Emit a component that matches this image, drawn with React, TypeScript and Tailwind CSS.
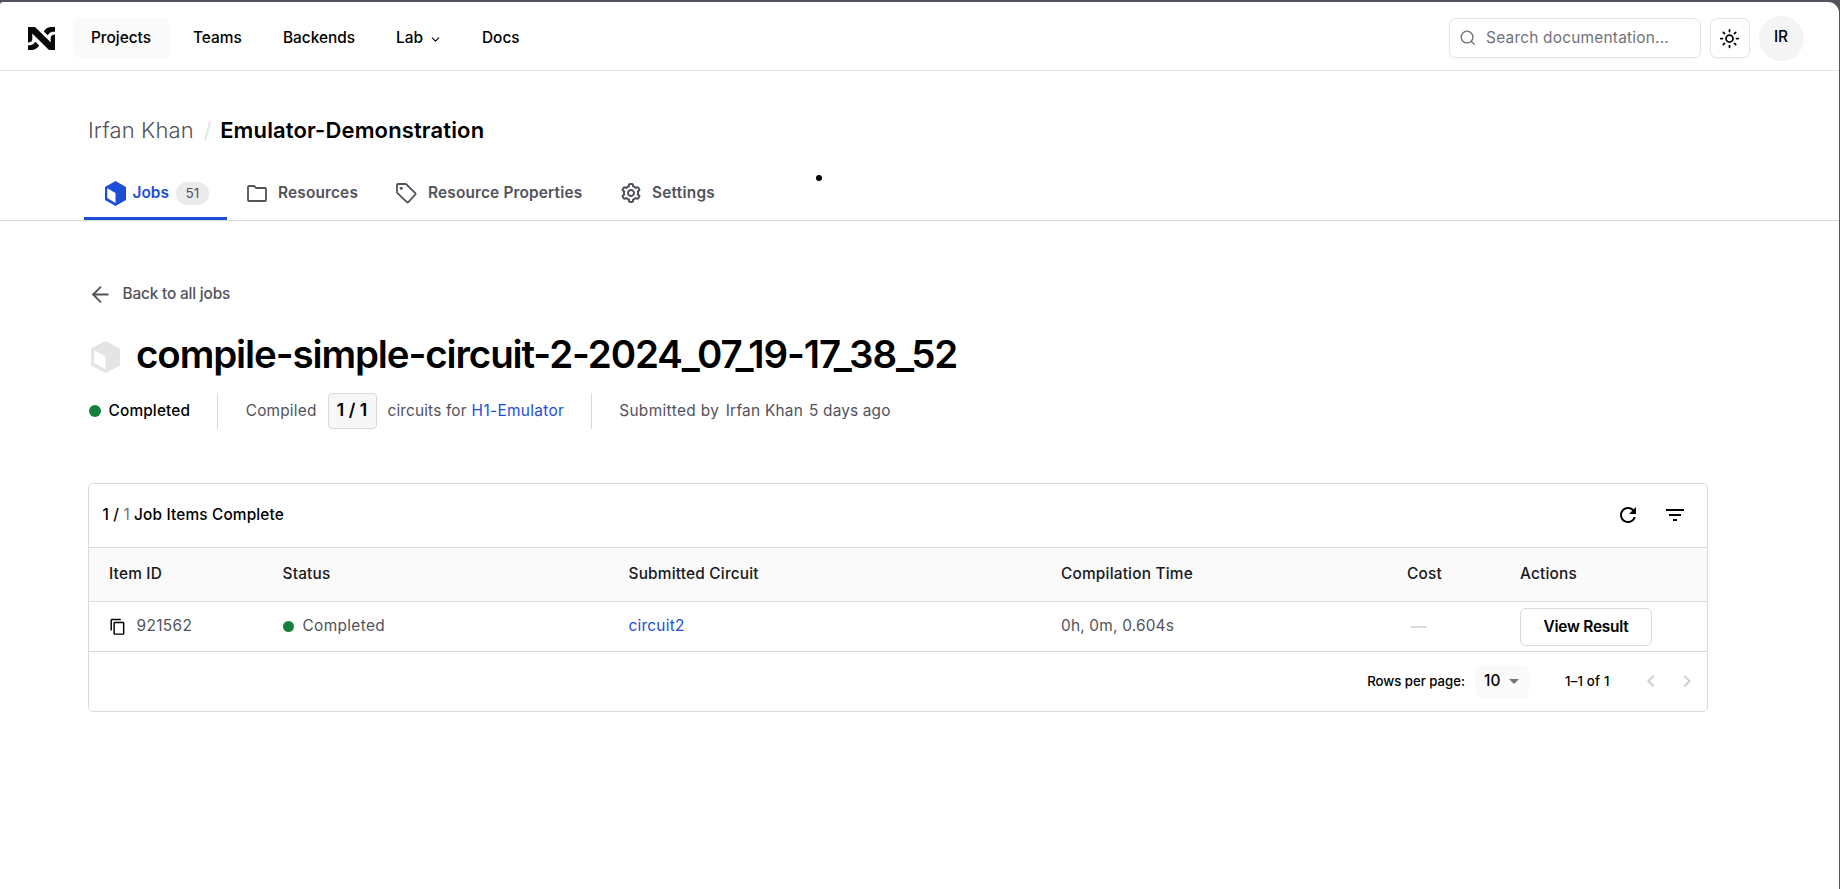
import type { ReactNode } from "react";
import { ArrowLeft, ChevronDown, Search, Sun } from "lucide-react";
import { BiCog } from "react-icons/bi";
import { MdArrowDropDown, MdChevronLeft, MdChevronRight, MdContentCopy, MdFilterList, MdRefresh } from "react-icons/md";

function Logo() {
  return (
    <svg className="mt-[1px] h-[23px] w-[27px] shrink-0" viewBox="0 0 27 23" fill="#09090b">
      <path d="M0 0H7L27 19.6V23H21L4.3 6.6V12Q4.3 15.3 0 15.5Z" />
      <path d="M0 18.3H2.5Q5.5 18 7.3 14.8L11.2 18.6Q8.5 23 3.5 23H0Z" />
      <path d="M27 4.7H24.5Q21.5 5 19.7 8.2L15.8 4.4Q18.5 0 23.5 0H27Z" />
      <path d="M27 20L22.7 16V11Q22.7 7.7 27 7.5Z" />
    </svg>
  );
}

function Cube({ className }: { className: string }) {
  return (
    <svg className={className} viewBox="0 0 28 32" preserveAspectRatio="none" fill="currentColor" fillRule="evenodd">
      <path d="M14 0L28 7.6V24.4L14 32L0 24.4V7.6ZM3 9.2V21.9L14 28V15.4Z" />
    </svg>
  );
}

function FolderIcon() {
  return (
    <svg className="h-[17px] w-[20px] shrink-0" viewBox="0 0 20 17" fill="none" stroke="currentColor" strokeWidth="1.8" strokeLinejoin="round">
      <path d="M1 2Q1 1 2 1H7L9.3 3H18Q19 3 19 4V15Q19 16 18 16H2Q1 16 1 15Z" />
    </svg>
  );
}

function TagIcon() {
  return (
    <svg className="h-[21px] w-[21px] shrink-0" viewBox="0 0 21 21" fill="none" stroke="currentColor" strokeWidth="1.8" strokeLinejoin="round">
      <path d="M1 2Q1 1 2 1H9.4Q10 1 10.5 1.5L19.3 10.1Q20 10.8 19.3 11.5L12.3 19.2Q11.6 19.9 10.9 19.2L1.5 10.2Q1 9.7 1 9Z" />
      <circle cx="5.2" cy="5.2" r="1.5" fill="currentColor" stroke="none" />
    </svg>
  );
}

function Dot() {
  return <span className="size-[11.5px] shrink-0 rounded-full bg-[#15803d]" />;
}

function Cell({ className, children }: { className: string; children?: ReactNode }) {
  return <div className={`flex shrink-0 items-center ${className}`}>{children}</div>;
}

export default function App() {
  return (
    <div className="h-[889px] w-[1840px] overflow-hidden bg-[#52525b] pt-[2px] pr-[1.5px] font-['Inter',sans-serif] text-[15.4px] leading-[22px] whitespace-nowrap text-black">
      <div className="relative h-full rounded-tl-[3px] rounded-tr-[11px] bg-white">
        <header className="flex h-[69px] items-center border-b border-[#e4e4e7] pt-[4px] pr-[35px] pl-[28px]">
          <Logo />
          <nav className="ml-[18px] flex items-center font-medium">
            <div className="flex h-[40px] w-[97px] items-center justify-center rounded-[7px] bg-[#fafafa] pr-px pb-px">Projects</div>
            <span className="ml-[23px] w-[90px] pb-px">Teams</span>
            <span className="w-[113px] pb-px">Backends</span>
            <span className="flex w-[86px] items-center gap-[6px] pb-px">
              Lab
              <ChevronDown className="mt-[4px] size-[13px]" strokeWidth={2} />
            </span>
            <span className="pb-px">Docs</span>
          </nav>
          <div className="ml-auto flex items-center">
            <div className="flex h-[40px] w-[252px] items-center rounded-[7px] border border-[#e4e4e7] pl-[9px] text-[#71717a] shadow-xs">
              <Search className="size-[17.6px]" strokeWidth={1.8} />
              <span className="ml-[10px] tracking-[0.23px]">Search documentation...</span>
            </div>
            <div className="ml-[9px] flex size-[40px] items-center justify-center rounded-[7px] border border-[#e4e4e7] shadow-xs">
              <Sun className="size-[21px]" strokeWidth={2} />
            </div>
            <div className="ml-[9px] flex size-[45px] items-center justify-center rounded-full bg-[#f4f4f5] pb-0.5 font-medium">IR</div>
          </div>
        </header>

        <section className="border-b border-[#d9d9dc] pl-[84px]">
          <div className="mt-[43px] flex h-[33px] items-center pl-[4px] text-[22px] leading-[33px]">
            <span className="font-light tracking-[0.1px] text-[#52525b]">Irfan Khan</span>
            <span className="ml-[10px] text-[#e4e4e7]">/</span>
            <span className="ml-[8.5px] font-semibold tracking-[0.14px]">Emulator-Demonstration</span>
          </div>
          <div className="mt-[16px] flex h-[57px] items-start font-semibold text-[#52525b]">
            <div className="flex h-[57px] w-[143px] items-center border-b-[3px] border-[#1d4ed8] pt-[6px] pl-[20.5px] text-[#1d4ed8]">
              <Cube className="h-[25px] w-[21px] shrink-0" />
              <span className="ml-[7px] pb-px">Jobs</span>
              <span className="ml-[7px] flex h-[23px] w-[33px] items-center justify-center rounded-full bg-[#ebebec] text-[13.6px] font-normal text-[#52525b]">51</span>
            </div>
            <div className="flex h-[54px] items-center pt-[6px] pl-[20px]">
              <FolderIcon />
              <span className="ml-[11px] w-[118px] pb-px tracking-[0.17px]">Resources</span>
              <TagIcon />
              <span className="ml-[11px] w-[190.5px] pb-px tracking-[0.17px]">Resource Properties</span>
              <BiCog className="size-[24px]" />
              <span className="ml-[9.5px] pb-px tracking-[0.25px]">Settings</span>
            </div>
          </div>
        </section>
        <div className="absolute top-[173px] left-[815.5px] size-[6px] rounded-full bg-black" />

        <main className="pl-[88px]">
          <div className="mt-[61px] flex h-[24px] items-center text-[#52525b]">
            <ArrowLeft className="size-[25px]" strokeWidth={1.8} />
            <span className="ml-[9.5px] font-medium tracking-[-0.18px]">Back to all jobs</span>
          </div>
          <div className="mt-[20px] flex h-[56px] items-center pl-[3px]">
            <Cube className="mt-[6px] h-[32px] w-[29px] shrink-0 text-[#e4e4e7]" />
            <h1 className="ml-[16px] text-[38.5px] leading-[56px] font-semibold tracking-[-1.12px]">compile-simple-circuit-2-2024_07_19-17_38_52</h1>
          </div>
          <div className="mt-[11px] flex h-[36px] items-center pl-[1px] text-[#52525b]">
            <Dot />
            <span className="ml-[8px] font-medium tracking-[0.15px] text-black">Completed</span>
            <span className="ml-[27px] h-full w-px bg-[#d9d9dc]" />
            <span className="ml-[27.5px] tracking-[0.2px]">Compiled</span>
            <span className="ml-[11px] flex h-[36px] w-[49px] items-center justify-center rounded-[4px] border border-[#dadadd] bg-[#f7f7f8] pb-0.5 text-[17.6px] font-semibold text-black">1 / 1</span>
            <span className="ml-[11px] tracking-[0.15px]">circuits for</span>
            <span className="ml-[5px] tracking-[0.33px] text-[#1d4ed8]">H1-Emulator</span>
            <span className="ml-[26.5px] h-full w-px bg-[#d9d9dc]" />
            <span className="ml-[27.5px] tracking-[0.37px]">Submitted by</span>
            <span className="ml-[6.5px] tracking-[0.25px]">Irfan Khan</span>
            <span className="ml-[6px] tracking-[0.15px]">5 days ago</span>
          </div>

          <div className="mt-[54px] flex h-[229px] w-[1620px] flex-col overflow-hidden rounded-[5px] border border-[#d9d9dc] tracking-[0.25px]">
            <div className="flex h-[64px] items-center border-b border-[#d9d9dc] pr-[20px] pb-px pl-[13.5px]">
              <span className="font-medium tracking-[0.15px]">
                1 / <span className="font-normal text-[#71717a]">1</span> Job Items Complete
              </span>
              <MdRefresh className="ml-auto size-[24px]" />
              <MdFilterList className="ml-[23px] size-[24px]" />
            </div>
            <div className="flex h-[54px] items-center border-b border-[#dededf] bg-[#fafafa] pb-0.5 pl-[20px] font-medium tracking-[0.2px] text-[#18181b]">
              <Cell className="w-[173.5px]">Item ID</Cell>
              <Cell className="w-[346px]">Status</Cell>
              <Cell className="w-[432.5px]">Submitted Circuit</Cell>
              <Cell className="w-[346px]">Compilation Time</Cell>
              <Cell className="w-[113px]">Cost</Cell>
              <Cell className="w-[150px]">Actions</Cell>
            </div>
            <div className="flex h-[50px] items-center border-b border-[#d9d9dc] pl-[20px] text-[#52525b]">
              <Cell className="w-[173.5px]">
                <MdContentCopy className="mt-px size-[17.6px] text-black" />
                <span className="ml-[10px] pb-0.5 tracking-[0.35px]">921562</span>
              </Cell>
              <Cell className="w-[346px]">
                <Dot />
                <span className="ml-[8.5px] pb-0.5 tracking-[0.35px]">Completed</span>
              </Cell>
              <Cell className="w-[432.5px] pb-0.5 text-[#1d4ed8]">circuit2</Cell>
              <Cell className="w-[346px] pb-0.5 tracking-[0.2px]">0h, 0m, 0.604s</Cell>
              <Cell className="w-[113px] pl-[4px]">
                <span className="mt-[1px] h-[2px] w-[16px] bg-[#d9d9dc]" />
              </Cell>
              <Cell className="w-[150px]">
                <button className="h-[38px] w-[132px] rounded-[6px] border border-[#d9d9dc] font-semibold tracking-[-0.22px] text-black">View Result</button>
              </Cell>
            </div>
            <div className="flex flex-1 items-center pr-[8px] pb-px text-[13.2px] font-medium tracking-normal">
              <span className="ml-auto">Rows per page:</span>
              <div className="ml-[10px] flex h-[33px] w-[54px] items-center rounded-[6px] bg-[#fafafa] pl-[9px] text-[15.4px]">
                <span className="pb-px">10</span>
                <MdArrowDropDown className="ml-[2px] size-[24px] text-[#757575]" />
              </div>
              <span className="ml-[36px] w-[74px] tracking-[0.2px]">1–1 of 1</span>
              <MdChevronLeft className="size-[24px] text-[#d0d0d2]" />
              <MdChevronRight className="ml-[12px] size-[24px] text-[#d0d0d2]" />
            </div>
          </div>
        </main>
      </div>
    </div>
  );
}
